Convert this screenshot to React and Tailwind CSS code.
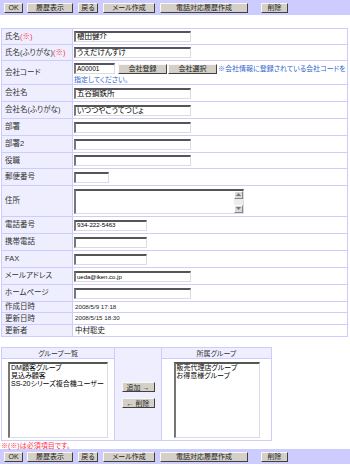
import React from "react";

function Btn({ className = "", children }) {
  return (
    <div
      className={
        "flex h-[10px] shrink-0 items-center justify-center whitespace-nowrap border border-t-[#f8f8f8] border-l-[#f8f8f8] border-r-[#404040] border-b-[#404040] bg-[#d4d0c8] text-[7px] leading-none text-[#222] " +
        className
      }
    >
      {children}
    </div>
  );
}

function Field({ className = "", children }) {
  return (
    <div
      className={
        "flex h-[11px] shrink-0 items-center overflow-hidden whitespace-nowrap border-t-2 border-l-2 border-r border-b border-t-[#555] border-l-[#777] border-r-[#dcdcdc] border-b-[#dcdcdc] bg-white pl-[1px] leading-none text-black " +
        className
      }
    >
      {children}
    </div>
  );
}

function Req() {
  return <span className="text-[#ff3355]">(※)</span>;
}

function Row({ h, label, children }) {
  return (
    <>
      <div className={"flex items-center bg-[#eeeeff] pl-[3px] text-[7.5px] leading-none whitespace-nowrap text-[#333] " + h}>
        {label}
      </div>
      <div className={"flex items-center bg-white pl-px " + h}>{children}</div>
    </>
  );
}

function Toolbar() {
  return (
    <div className="flex h-[15px] items-center bg-[#ccccff] pl-[4px]">
      <Btn className="w-[19px]">OK</Btn>
      <Btn className="ml-[4px] w-[46px]">履歴表示</Btn>
      <Btn className="ml-[5px] w-[20px]">戻る</Btn>
      <Btn className="ml-[5px] w-[52px]">メール作成</Btn>
      <Btn className="ml-[5px] w-[88px]">電話対応履歴作成</Btn>
      <Btn className="ml-[13px] w-[27px]">削除</Btn>
    </div>
  );
}

export default function App() {
  return (
    <div className="h-[467px] w-[350px] overflow-hidden bg-white text-black [font-family:'Liberation_Sans','Noto_Sans_CJK_JP',sans-serif] [font-feature-settings:'palt']">
      <Toolbar />

      <div className="ml-[1px] mt-[13px] grid w-[347px] grid-cols-[70px_1fr] gap-px bg-[#ccccff] p-px">
        <Row h="h-[15px]" label={<>氏名<Req /></>}>
          <Field className="w-[117px] text-[7.5px]">植田健介</Field>
        </Row>
        <Row h="h-[15px]" label={<>氏名(ふりがな)<Req /></>}>
          <Field className="w-[117px] text-[7.5px]">うえだけんすけ</Field>
        </Row>
        <Row h="h-[23px]" label="会社コード">
          <div className="flex h-full flex-col pt-[2px]">
            <div className="flex items-center">
              <Field className="w-[41px] text-[6.5px]">A00001</Field>
              <Btn className="ml-[3px] w-[49px]">会社登録</Btn>
              <Btn className="ml-[1px] w-[49px]">会社選択</Btn>
              <span className="ml-[1px] whitespace-nowrap text-[7px] leading-none text-[#3366cc]">
                ※会社情報に登録されている会社コードを
              </span>
            </div>
            <div className="mt-[1px] text-[7px] leading-[9px] text-[#3366cc]">指定してください。</div>
          </div>
        </Row>
        <Row h="h-[16px]" label="会社名">
          <Field className="w-[117px] text-[7.5px]">五谷鋼鉄所</Field>
        </Row>
        <Row h="h-[16px]" label="会社名(ふりがな)">
          <Field className="w-[117px] text-[7.5px]">いつつやこうてつじょ</Field>
        </Row>
        <Row h="h-[16px]" label="部署">
          <Field className="w-[117px]" />
        </Row>
        <Row h="h-[16px]" label="部署2">
          <Field className="w-[117px]" />
        </Row>
        <Row h="h-[15px]" label="役職">
          <Field className="w-[117px]" />
        </Row>
        <Row h="h-[16px]" label="郵便番号">
          <Field className="w-[35px]" />
        </Row>
        <Row h="h-[30px]" label="住所">
          <div className="flex h-[25px] w-[170px] border-t-2 border-l-2 border-r border-b border-t-[#555] border-l-[#777] border-r-[#dcdcdc] border-b-[#dcdcdc] bg-white">
            <div className="flex-1" />
            <div className="flex w-[9px] flex-col justify-between bg-[#ececec]">
              <div className="flex h-[8px] items-center justify-center border border-t-white border-l-white border-r-[#888] border-b-[#888] bg-[#d8d8d8]">
                <svg width="5" height="3" viewBox="0 0 5 3">
                  <path d="M0 3 L2.5 0 L5 3 Z" fill="#777" />
                </svg>
              </div>
              <div className="flex h-[8px] items-center justify-center border border-t-white border-l-white border-r-[#888] border-b-[#888] bg-[#d8d8d8]">
                <svg width="5" height="3" viewBox="0 0 5 3">
                  <path d="M0 0 L2.5 3 L5 0 Z" fill="#777" />
                </svg>
              </div>
            </div>
          </div>
        </Row>
        <Row h="h-[16px]" label="電話番号">
          <Field className="w-[73px] text-[6.2px]">934-222-5463</Field>
        </Row>
        <Row h="h-[16px]" label="携帯電話">
          <Field className="w-[73px]" />
        </Row>
        <Row h="h-[16px]" label="FAX">
          <Field className="w-[73px]" />
        </Row>
        <Row h="h-[16px]" label="メールアドレス">
          <Field className="w-[117px] text-[6px]">ueda@iken.co.jp</Field>
        </Row>
        <Row h="h-[16px]" label="ホームページ">
          <Field className="w-[117px]" />
        </Row>
        <Row h="h-[10px]" label="作成日時">
          <span className="pl-[1px] text-[6.2px] leading-none text-[#222]">2008/5/9 17:18</span>
        </Row>
        <Row h="h-[11px]" label="更新日時">
          <span className="pl-[1px] text-[6.2px] leading-none text-[#222]">2008/5/15 18:30</span>
        </Row>
        <Row h="h-[11px]" label="更新者">
          <span className="pl-[1px] text-[7.5px] leading-none text-[#222]">中村聡史</span>
        </Row>
      </div>

      <div className="ml-[1px] mt-[10px] grid w-[271px] grid-cols-[112px_46px_1fr] grid-rows-[10px_81px] gap-px bg-[#ccccff] p-px">
        <div className="flex items-center justify-center bg-[#eeeeff] text-[7px] leading-none text-[#333]">グループ一覧</div>
        <div className="row-span-2 flex flex-col items-center bg-[#eeeeff] pt-[34px]">
          <Btn className="w-[33px]">追加 →</Btn>
          <Btn className="mt-[6px] w-[33px]">← 削除</Btn>
        </div>
        <div className="flex items-center justify-center bg-[#eeeeff] text-[7px] leading-none text-[#333]">所属グループ</div>

        <div className="flex justify-center bg-white pt-[3px]">
          <div className="h-[76px] w-[100px] border-t-2 border-l-2 border-r border-b border-t-[#555] border-l-[#777] border-r-[#dcdcdc] border-b-[#dcdcdc] bg-white pl-[1px] text-[7px] leading-[8px] text-black">
            <div className="whitespace-nowrap">DM顧客グループ</div>
            <div className="whitespace-nowrap">見込み顧客</div>
            <div className="whitespace-nowrap">SS-20シリーズ複合機ユーザー</div>
          </div>
        </div>
        <div className="flex justify-center bg-white pt-[3px]">
          <div className="h-[76px] w-[86px] border-t-2 border-l-2 border-r border-b border-t-[#555] border-l-[#777] border-r-[#dcdcdc] border-b-[#dcdcdc] bg-white pl-[1px] text-[7px] leading-[8px] text-black">
            <div className="whitespace-nowrap">販売代理店グループ</div>
            <div className="whitespace-nowrap">お得意様グループ</div>
          </div>
        </div>
      </div>

      <div className="h-[8px] pl-[1px] text-[7px] leading-[9px] text-[#ff3344]">※(※)は必須項目です。</div>

      <Toolbar />
    </div>
  );
}
